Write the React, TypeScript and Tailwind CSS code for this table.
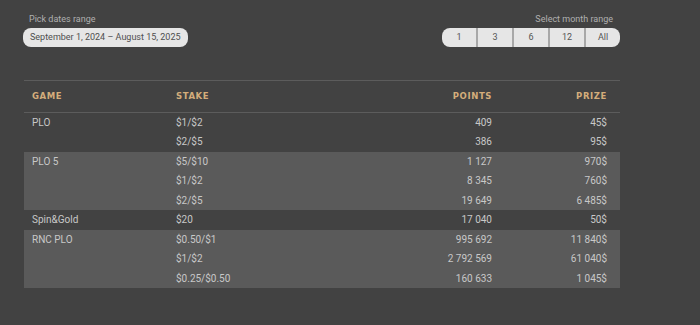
import React from 'react';

type Row = { game: string; stake: string; points: string; prize: string };
type Group = { rows: Row[]; shaded: boolean };

const groups: Group[] = [
  {
    shaded: false,
    rows: [
      { game: 'PLO', stake: '$1/$2', points: '409', prize: '45$' },
      { game: '', stake: '$2/$5', points: '386', prize: '95$' },
    ],
  },
  {
    shaded: true,
    rows: [
      { game: 'PLO 5', stake: '$5/$10', points: '1 127', prize: '970$' },
      { game: '', stake: '$1/$2', points: '8 345', prize: '760$' },
      { game: '', stake: '$2/$5', points: '19 649', prize: '6 485$' },
    ],
  },
  {
    shaded: false,
    rows: [{ game: 'Spin&Gold', stake: '$20', points: '17 040', prize: '50$' }],
  },
  {
    shaded: true,
    rows: [
      { game: 'RNC PLO', stake: '$0.50/$1', points: '995 692', prize: '11 840$' },
      { game: '', stake: '$1/$2', points: '2 792 569', prize: '61 040$' },
      { game: '', stake: '$0.25/$0.50', points: '160 633', prize: '1 045$' },
    ],
  },
];

const months = ['1', '3', '6', '12', 'All'];

const App: React.FC = () => {
  return (
    <div className="min-h-screen bg-[#424242] font-['Roboto',sans-serif]">
      <div className="ml-[23px] w-[597px] pt-[12px]">
        <div className="flex justify-between items-end">
          <div className="flex flex-col">
            <span className="pl-[6px] text-[9px] leading-[14px] text-[#b0b0b0]">Pick dates range</span>
            <div className="mt-[2px] h-[19px] px-[7px] rounded-[8px] bg-[#e6e6e6] text-[9px] leading-[19px] text-[#4f4f4f]">
              September 1, 2024 – August 15, 2025
            </div>
          </div>
          <div className="flex flex-col items-end">
            <span className="pr-[7px] text-[9px] leading-[14px] text-[#b0b0b0]">Select month range</span>
            <div className="mt-[2px] flex h-[19px] w-[178px] overflow-hidden rounded-[8px] bg-[#e6e6e6]">
              {months.map((m, i) => (
                <button
                  key={m}
                  className={`flex-1 text-[9px] leading-[19px] text-[#555] ${i > 0 ? 'border-l-2 border-[#a8a8a8]' : ''}`}
                >
                  {m}
                </button>
              ))}
            </div>
          </div>
        </div>

        <table className="mt-[33px] ml-[1px] w-[596px] table-fixed border-collapse">
          <colgroup>
            <col className="w-[144px]" />
            <col className="w-[176px]" />
            <col className="w-[156px]" />
            <col className="w-[120px]" />
          </colgroup>
          <thead>
            <tr className="h-[32px] border-t border-b border-[#5c5c5c] text-[8.5px] font-black tracking-[0.07em] text-[#d4ad7b] font-['DejaVu_Sans',sans-serif]">
              <th className="pl-[8px] text-left">GAME</th>
              <th className="pl-[8px] text-left">STAKE</th>
              <th className="pr-[8px] text-right">POINTS</th>
              <th className="pr-[13px] text-right">PRIZE</th>
            </tr>
          </thead>
          {groups.map((g, gi) => (
            <tbody key={gi} className={g.shaded ? 'bg-[#5a5a5a]' : ''}>
              {g.rows.map((r, ri) => (
                <tr key={ri} className="h-[19.5px] text-[10px] leading-[19px] text-[#c8c8c8]">
                  <td className="pl-[8px]">{r.game}</td>
                  <td className="pl-[8px]">{r.stake}</td>
                  <td className="pr-[8px] text-right">{r.points}</td>
                  <td className="pr-[13px] text-right">{r.prize}</td>
                </tr>
              ))}
            </tbody>
          ))}
        </table>
      </div>
    </div>
  );
};

export default App;
